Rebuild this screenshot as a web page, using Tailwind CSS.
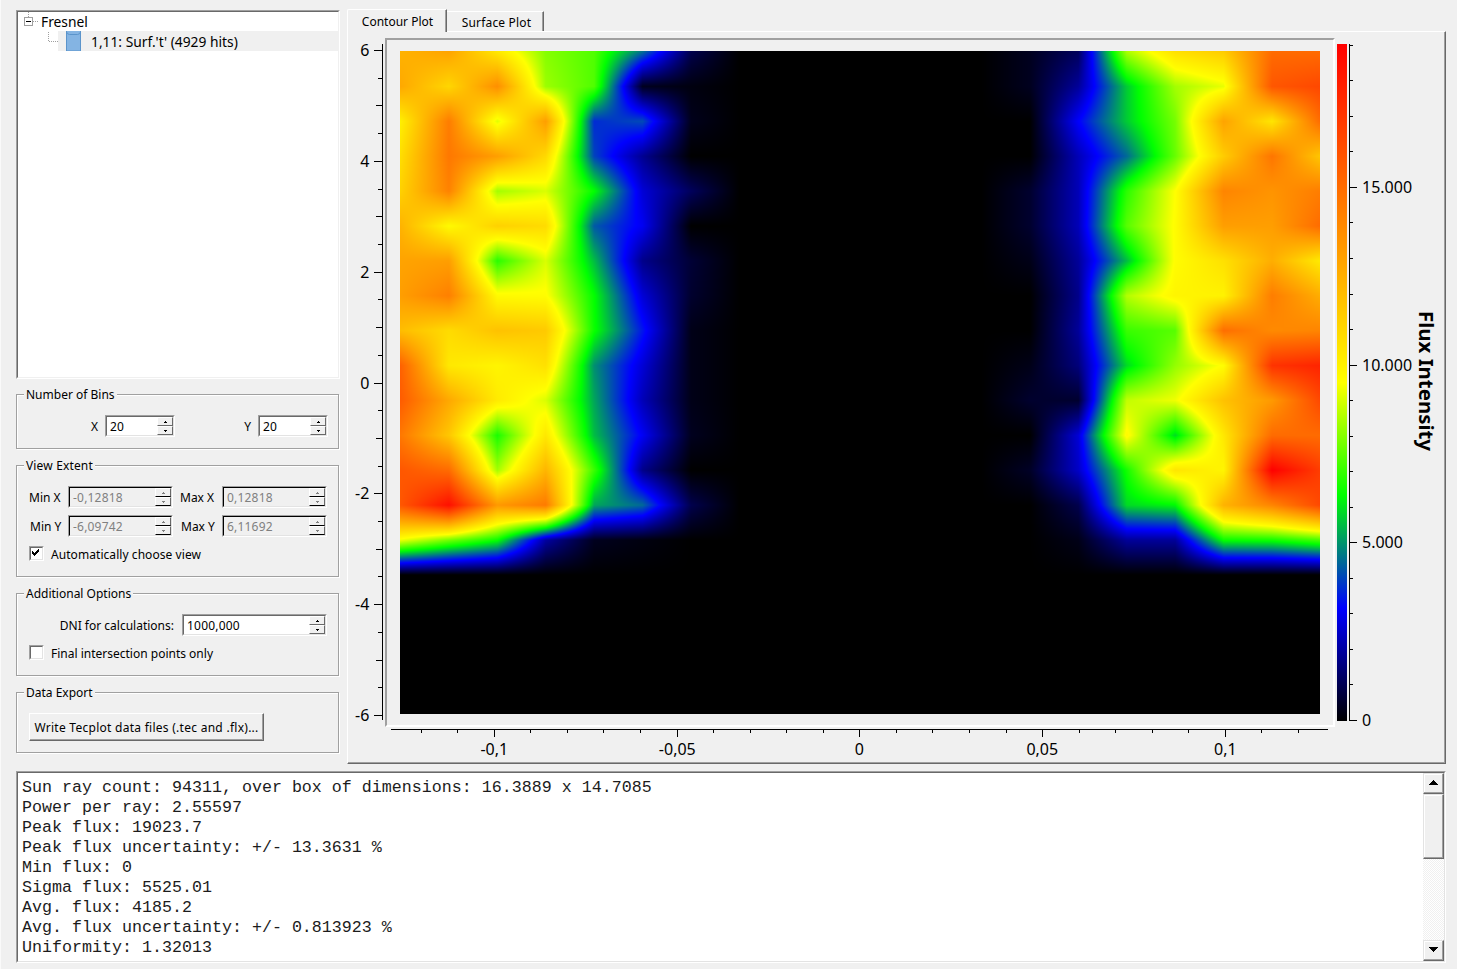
<!DOCTYPE html>
<html lang="en">
<head>
<meta charset="utf-8">
<title>Flux distribution</title>
<script src="https://cdn.jsdelivr.net/npm/@tailwindcss/browser@4"></script>
</head>
<body class="h-[969px] w-[1457px] overflow-hidden bg-[#f0f0f0] font-['Noto_Sans',sans-serif] text-[12px] leading-[14px] text-black">
<div class="flex h-[969px] flex-col border-l border-[#fafafa] pt-[9px] pl-[15px]">
  <div class="flex h-[755px]">
    <!-- Sidebar -->
    <aside class="mt-px flex w-[323px] flex-col">
      <div class="h-[369px] w-[324px] border border-t-[#a0a0a0] border-r-white border-b-white border-l-[#a0a0a0]">
        <div class="h-full border border-t-[#696969] border-r-[#f0f0f0] border-b-[#f0f0f0] border-l-[#696969] bg-white text-[13.8px]">
          <div class="flex h-[19px] items-center">
            <svg class="h-[19px] w-[23px] shrink-0" viewBox="18 12 23 19" shape-rendering="crispEdges"><path d="M28.5 12v5M33 21.5h6" stroke="#a0a0a0" stroke-dasharray="1 1"/><rect x="24.5" y="17.5" width="8" height="8" fill="#fff" stroke="#a0a0a0"/><path d="M26 21.5h5" stroke="#000"/></svg>
            <span class="whitespace-nowrap">Fresnel</span>
          </div>
          <div class="flex h-[20px]">
            <svg class="h-[20px] w-[40px] shrink-0" viewBox="18 31 40 20" shape-rendering="crispEdges"><path d="M48.5 32v10M49 41.5h9" stroke="#a0a0a0" stroke-dasharray="1 1" fill="none"/></svg>
            <div class="flex flex-1 items-center bg-[#f0f0f0] pl-[8px]">
              <svg class="h-[20px] w-[15px] shrink-0" viewBox="0 0 15 20"><path d="M0 0H15V20H0z" fill="#84b4e3"/><path d="M.5 0V20M14.5 0V20" stroke="#5b94cb"/><path d="M.5 1q.5 2.3 3 2.5h8q2.500-.2 3-2.500" fill="none" stroke="#5b94cb"/><path d="M1 19.5h13" stroke="#5b94cb" stroke-opacity=".5"/></svg>
              <span class="pt-[2px] pl-[10px] whitespace-nowrap">1,11: Surf.'t' (4929 hits)</span>
            </div>
          </div>
        </div>
      </div>

      <section class="relative mt-[15px] h-[55px] border border-[#a0a0a0] pt-[20px] shadow-[1px_1px_0_#fff,inset_1px_1px_0_#fff]">
        <h2 class="absolute -top-[7px] left-[7px] bg-[#f0f0f0] px-[2px] whitespace-nowrap">Number of Bins</h2>
        <div class="flex items-center">
          <span class="w-[88px] pt-[2px] pr-[7px] text-right">X</span>
          <div class="h-[22px] w-[70px] border border-t-[#a0a0a0] border-r-white border-b-white border-l-[#a0a0a0]"><div class="flex h-full items-center border border-t-[#696969] border-r-[#e3e3e3] border-b-[#e3e3e3] border-l-[#696969] bg-white pl-[3px]"><span class="flex-1 pt-[2px] tracking-[0.2px]">20</span><span class="spin flex h-[18px] w-[16px] flex-col"></span></div></div>
          <span class="w-[83px] pt-[2px] pr-[7px] text-right">Y</span>
          <div class="h-[22px] w-[70px] border border-t-[#a0a0a0] border-r-white border-b-white border-l-[#a0a0a0]"><div class="flex h-full items-center border border-t-[#696969] border-r-[#e3e3e3] border-b-[#e3e3e3] border-l-[#696969] bg-white pl-[3px]"><span class="flex-1 pt-[2px] tracking-[0.2px]">20</span><span class="spin flex h-[18px] w-[16px] flex-col"></span></div></div>
        </div>
      </section>

      <section class="relative mt-[16px] h-[112px] border border-[#a0a0a0] pt-[20px] pl-[12px] shadow-[1px_1px_0_#fff,inset_1px_1px_0_#fff]">
        <h2 class="absolute -top-[7px] left-[7px] bg-[#f0f0f0] px-[2px] tracking-[0.15px] whitespace-nowrap">View Extent</h2>
        <div class="flex items-center">
          <span class="w-[39px] pt-[2px] whitespace-nowrap">Min X</span>
          <div class="h-[22px] w-[105px] border border-t-[#a0a0a0] border-r-white border-b-white border-l-[#a0a0a0]"><div class="flex h-full items-center border border-t-black border-r-[#e3e3e3] border-b-[#e3e3e3] border-l-black pl-[3px] text-[#808080]"><span class="flex-1 pt-[2px] tracking-[0.2px]">-0,12818</span><span class="spin off flex h-[18px] w-[16px] flex-col"></span></div></div>
          <span class="w-[49px] pt-[2px] pl-[7px] whitespace-nowrap">Max X</span>
          <div class="h-[22px] w-[105px] border border-t-[#a0a0a0] border-r-white border-b-white border-l-[#a0a0a0]"><div class="flex h-full items-center border border-t-black border-r-[#e3e3e3] border-b-[#e3e3e3] border-l-black pl-[3px] text-[#808080]"><span class="flex-1 pt-[2px] tracking-[0.2px]">0,12818</span><span class="spin off flex h-[18px] w-[16px] flex-col"></span></div></div>
        </div>
        <div class="mt-[7px] flex items-center">
          <span class="w-[39px] pt-[2px] pl-px whitespace-nowrap">Min Y</span>
          <div class="h-[22px] w-[105px] border border-t-[#a0a0a0] border-r-white border-b-white border-l-[#a0a0a0]"><div class="flex h-full items-center border border-t-black border-r-[#e3e3e3] border-b-[#e3e3e3] border-l-black pl-[3px] text-[#808080]"><span class="flex-1 pt-[2px] tracking-[0.2px]">-6,09742</span><span class="spin off flex h-[18px] w-[16px] flex-col"></span></div></div>
          <span class="w-[49px] pt-[2px] pl-[8px] whitespace-nowrap">Max Y</span>
          <div class="h-[22px] w-[105px] border border-t-[#a0a0a0] border-r-white border-b-white border-l-[#a0a0a0]"><div class="flex h-full items-center border border-t-black border-r-[#e3e3e3] border-b-[#e3e3e3] border-l-black pl-[3px] text-[#808080]"><span class="flex-1 pt-[2px] tracking-[0.2px]">6,11692</span><span class="spin off flex h-[18px] w-[16px] flex-col"></span></div></div>
        </div>
        <div class="mt-[8px] flex items-center">
          <div class="size-[15px] border border-t-[#a0a0a0] border-r-white border-b-white border-l-[#a0a0a0]"><div class="size-[13px] border border-t-[#696969] border-r-[#e3e3e3] border-b-[#e3e3e3] border-l-[#696969] bg-white"><svg class="size-[11px]" viewBox="0 0 11 11" shape-rendering="crispEdges"><path d="M1 3h1v1h1v1h1V4h1V3h1V2h1V1h1v3H7v1H6v1H5v1H4v1H3V7H2V6H1z"/></svg></div></div>
          <span class="pt-[3px] pl-[7px] tracking-[0.06px] whitespace-nowrap">Automatically choose view</span>
        </div>
      </section>

      <section class="relative mt-[16px] h-[83px] border border-[#a0a0a0] pt-[20px] pl-[12px] shadow-[1px_1px_0_#fff,inset_1px_1px_0_#fff]">
        <h2 class="absolute -top-[7px] left-[7px] bg-[#f0f0f0] px-[2px] whitespace-nowrap">Additional Options</h2>
        <div class="flex items-center">
          <span class="w-[153px] pt-[2px] pr-[8px] text-right whitespace-nowrap">DNI for calculations:</span>
          <div class="h-[22px] w-[145px] border border-t-[#a0a0a0] border-r-white border-b-white border-l-[#a0a0a0]"><div class="flex h-full items-center border border-t-[#696969] border-r-[#e3e3e3] border-b-[#e3e3e3] border-l-[#696969] bg-white pl-[3px]"><span class="flex-1 pt-[2px] tracking-[0.2px]">1000,000</span><span class="spin flex h-[18px] w-[16px] flex-col"></span></div></div>
        </div>
        <div class="mt-[8px] flex items-center">
          <div class="size-[15px] border border-t-[#a0a0a0] border-r-white border-b-white border-l-[#a0a0a0]"><div class="size-[13px] border border-t-[#696969] border-r-[#e3e3e3] border-b-[#e3e3e3] border-l-[#696969] bg-white"></div></div>
          <span class="pt-[3px] pl-[7px] whitespace-nowrap">Final intersection points only</span>
        </div>
      </section>

      <section class="relative mt-[16px] h-[61px] border border-[#a0a0a0] pt-[20px] pl-[12px] shadow-[1px_1px_0_#fff,inset_1px_1px_0_#fff]">
        <h2 class="absolute -top-[7px] left-[7px] bg-[#f0f0f0] px-[2px] whitespace-nowrap">Data Export</h2>
        <button class="block h-[28px] w-[235px] border border-t-white border-r-[#696969] border-b-[#696969] border-l-white pt-[2px] text-center tracking-[0.27px] whitespace-nowrap shadow-[inset_-1px_-1px_0_#a0a0a0]">Write Tecplot data files (.tec and .flx)...</button>
      </section>
    </aside>

    <!-- Plot tabs -->
    <main class="ml-[8px] flex w-[1099px] flex-col">
      <div class="flex h-[22px] items-end">
        <div class="z-10 -mb-px h-[23px] w-[100px] rounded-tl-[2px] border-t border-r border-l border-t-white border-r-[#696969] border-l-white bg-[#f0f0f0] pt-[5px] pl-px text-center whitespace-nowrap shadow-[inset_-1px_0_0_#a0a0a0]">Contour Plot</div>
        <div class="h-[20px] w-[97px] border-t border-r border-t-white border-r-[#696969] pt-[4px] pl-[3px] text-center tracking-[0.18px] whitespace-nowrap shadow-[inset_-1px_0_0_#a0a0a0]">Surface Plot</div>
      </div>
      <div class="grid h-[733px] grid-cols-[37px_950px_1fr] grid-rows-[689px_36px] border border-t-white border-r-[#696969] border-b-[#696969] border-l-white pt-[6px] shadow-[inset_-1px_-1px_0_#a0a0a0]">
        <svg class="h-[689px] w-[37px] overflow-visible text-[16px]" viewBox="348 38 37 689"><path id="ay" fill="none" stroke="#000" shape-rendering="crispEdges"/><g id="ly" text-anchor="end"></g></svg>
        <div class="border-2 border-t-[#a0a0a0] border-r-white border-b-white border-l-[#a0a0a0] pt-[11px] pl-[13px]">
          <canvas id="flux" class="block h-[663px] w-[920px]" width="920" height="663"></canvas>
        </div>
        <div class="flex pt-[6px] pl-[2px]">
          <div class="h-[677px] w-[10px] bg-[linear-gradient(to_top,#000_0%,#00f_16.67%,#0f0_33.33%,#ff0_50%,#f00_100%)]"></div>
          <svg class="h-[677px] w-[95px] overflow-visible text-[16px]" viewBox="1347 44 95 677"><path id="az" fill="none" stroke="#000" shape-rendering="crispEdges"/><g id="lz"></g><text transform="translate(1419 311) rotate(90)" font-size="19.500" font-weight="700" textLength="140" lengthAdjust="spacingAndGlyphs">Flux Intensity</text></svg>
        </div>
        <svg class="col-span-3 h-[36px] w-[1096px] overflow-visible text-[16px]" viewBox="348 727 1096 36"><path id="ax" fill="none" stroke="#000" shape-rendering="crispEdges"/><g id="lx" text-anchor="middle"></g></svg>
      </div>
    </main>
  </div>

  <!-- Result log -->
  <div class="mt-[7px] h-[192px] w-[1430px] border border-t-[#a0a0a0] border-r-white border-b-white border-l-[#a0a0a0]">
    <div class="flex h-full border border-t-[#696969] border-r-[#e3e3e3] border-b-[#e3e3e3] border-l-[#696969] bg-white">
      <pre class="flex-1 pt-[5px] pl-[4px] font-['Liberation_Mono',monospace] text-[16.66px] leading-[20px] text-[#1c1c1c]">Sun ray count: 94311, over box of dimensions: 16.3889 x 14.7085
Power per ray: 2.55597
Peak flux: 19023.7
Peak flux uncertainty: +/- 13.3631 %
Min flux: 0
Sigma flux: 5525.01
Avg. flux: 4185.2
Avg. flux uncertainty: +/- 0.813923 %
Uniformity: 1.32013</pre>
      <div class="flex w-[21px] flex-col bg-[repeating-conic-gradient(#fff_0_25%,#f0f0f0_0_50%)] bg-size-[2px_2px]">
        <div class="flex h-[21px] items-center justify-center border border-t-[#e3e3e3] border-r-[#696969] border-b-[#696969] border-l-[#e3e3e3] bg-[#f0f0f0] pb-[2px] shadow-[inset_-1px_-1px_0_#a0a0a0,inset_1px_1px_0_#fff]"><svg class="h-[5px] w-[9px]" viewBox="0 0 9 5" shape-rendering="crispEdges"><path d="M4 0h1v1h1v1h1v1h1v1h1v1H0V4h1V3h1V2h1V1h1z"/></svg></div>
        <div class="h-[65px] border border-t-[#e3e3e3] border-r-[#696969] border-b-[#696969] border-l-[#e3e3e3] bg-[#f0f0f0] shadow-[inset_-1px_-1px_0_#a0a0a0,inset_1px_1px_0_#fff]"></div>
        <div class="mt-auto flex h-[21px] items-center justify-center border border-t-[#e3e3e3] border-r-[#696969] border-b-[#696969] border-l-[#e3e3e3] bg-[#f0f0f0] pb-[2px] shadow-[inset_-1px_-1px_0_#a0a0a0,inset_1px_1px_0_#fff]"><svg class="h-[5px] w-[9px]" viewBox="0 0 9 5" shape-rendering="crispEdges"><path d="M0 0h9v1H8v1H7v1H6v1H5v1H4V4H3V3H2V2H1V1H0z"/></svg></div>
      </div>
    </div>
  </div>
</div>
<script>
// Spin box arrow buttons
document.querySelectorAll('.spin').forEach(function (s) {
  var off = s.classList.contains('off');
  var edge = off ? 'border-r-[#696969] border-b-black' : 'border-r-[#696969] border-b-[#696969]';
  var fill = off ? '#808080' : '#000';
  ['M2 0h1v1h1v1H1V1h1z', 'M1 0h3v1H3v1H2V1H1z'].forEach(function (d) {
    s.innerHTML += '<span class="flex h-[9px] items-center justify-center border border-t-white border-l-white bg-[#f0f0f0] ' + edge + '"><svg class="h-[2px] w-[5px]" viewBox="0 0 5 2" shape-rendering="crispEdges"><path fill="' + fill + '" d="' + d + '"/></svg></span>';
  });
});

// Axes
function label(id, x, y, t) {
  var e = document.createElementNS('http://www.w3.org/2000/svg', 'text');
  e.setAttribute('x', x); e.setAttribute('y', y); e.textContent = t;
  document.getElementById(id).appendChild(e);
}
var d = 'M382.5 44V720', i, p;
for (i = 0; i <= 24; i++) {
  p = Math.floor(50.5 + i * 27.71) + .5;
  d += 'M' + (i % 4 == 0 ? 374 : i % 2 == 0 ? 376 : 378) + ' ' + p + 'H382';
  if (i % 4 == 0) label('ly', 369.3, p + 5.5, String(6 - i / 2));
}
document.getElementById('ay').setAttribute('d', d);
d = 'M391 729.5H1328';
for (i = -12; i <= 12; i++) {
  p = Math.floor(859.8 + i * 36.56) + .5;
  d += 'M' + p + ' 730V' + (i % 5 == 0 ? 737 : 733);
  if (i % 5 == 0) label('lx', p - .2, 755, { '-10': '-0,1', '-5': '-0,05', '0': '0', '5': '0,05', '10': '0,1' }[i]);
}
document.getElementById('ax').setAttribute('d', d);
d = 'M1349.5 44V721';
for (i = 0; i <= 19; i++) {
  p = Math.floor(720.4 - i * 35.53) + .5;
  d += 'M1350 ' + p + 'H' + (i % 5 == 0 ? 1357 : 1353);
  if (i % 5 == 0) label('lz', 1362, p + 5.5, i ? i + '.000' : '0');
}
document.getElementById('az').setAttribute('d', d);

// Flux grid, thousandths of the peak, 20 bins across; the lower rows are empty.
// Each row lists the bins left of the dark gap and the bins right of it.
var rows = [
  [[650,680,545,420,385,240,50,0], [20,60,445,560,600,790,790]],
  [[670,580,720,435,385,20,10,0], [20,100,300,440,485,830,860]],
  [[530,755,480,690,195,215,18,0], [0,165,300,410,680,550,790]],
  [[565,765,690,575,210,95,0,0], [0,120,235,400,600,770,610]],
  [[590,745,440,475,335,140,60,0], [30,120,360,500,740,710,755]],
  [[650,510,590,570,225,158,0,0], [30,120,390,505,690,690,790]],
  [[680,690,360,475,290,90,35,0], [15,100,290,505,560,660,540]],
  [[690,750,510,505,335,140,30,0], [0,90,450,520,525,755,660]],
  [[630,570,620,605,340,180,15,0], [0,100,370,390,785,730,740]],
  [[810,545,520,560,260,140,15,0], [15,80,310,430,505,900,930]],
  [[820,670,540,475,275,120,15,0], [30,30,460,490,620,700,860]],
  [[765,610,350,545,290,160,20,0], [0,140,510,310,545,790,790]],
  [[830,790,440,645,370,90,0,0], [25,130,345,550,520,1000,880]],
  [[830,970,700,760,275,235,50,0], [0,50,310,330,650,740,860]],
  [[490,410,340,105,20,10,0,0], [0,15,100,100,340,345,380]]
];
var grid = [];
for (i = 0; i < 20; i++) grid.push(rows[i] ? rows[i][0].concat([0,0,0,0,0], rows[i][1]) : new Array(20).fill(0));
var stops = [[0,0,0,0],[1/6,0,0,255],[1/3,0,255,0],[.5,255,255,0],[1,255,0,0]];
var W = 920, H = 663, g = document.getElementById('flux').getContext('2d'), im = g.createImageData(W, H), o = 0;
for (var y = 0; y < H; y++) for (var x = 0; x < W; x++) {
  var u = x / W * 19, v = y / H * 19, a = Math.floor(u), b = Math.floor(v), s = u - a, t = v - b;
  var q = ((grid[b][a] * (1 - s) + grid[b][a + 1] * s) * (1 - t) + (grid[b + 1][a] * (1 - s) + grid[b + 1][a + 1] * s) * t) / 1000;
  var k = 1;
  while (k < 4 && q > stops[k][0]) k++;
  var A = stops[k - 1], B = stops[k], f = (q - A[0]) / (B[0] - A[0]);
  for (var c = 1; c < 4; c++) im.data[o++] = A[c] + (B[c] - A[c]) * f;
  im.data[o++] = 255;
}
g.putImageData(im, 0, 0);
</script>
</body>
</html>
